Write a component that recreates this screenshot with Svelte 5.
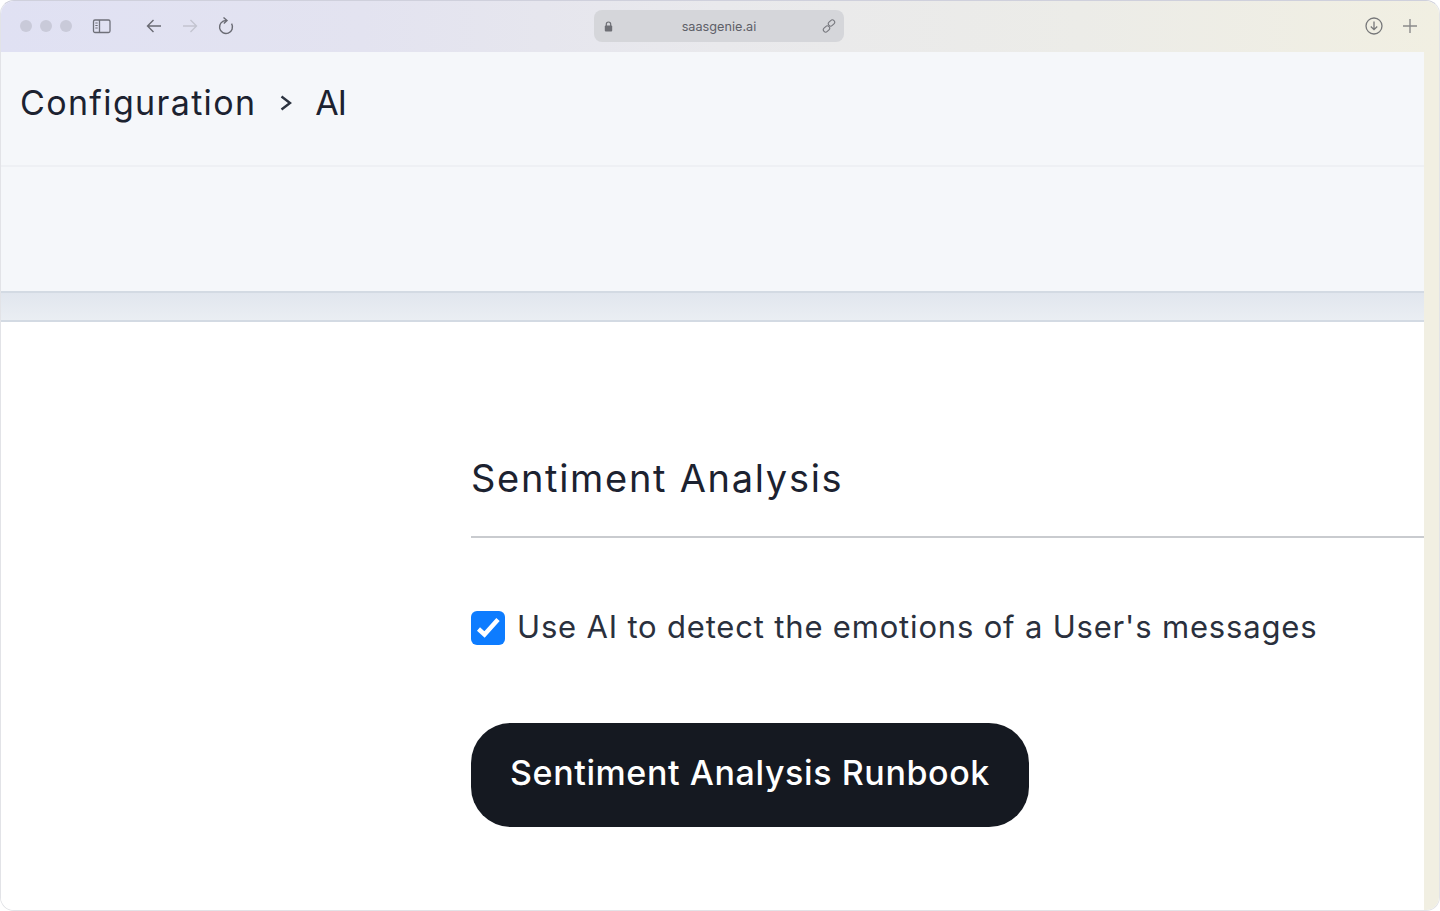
<script>
  const title = "Sentiment Analysis";
</script>

<div class="window">
  <header class="toolbar">
    <div class="lights">
      <span></span><span></span><span></span>
    </div>
    <svg class="ico sidebar" width="20" height="16" viewBox="0 0 20 16">
      <rect x="1.5" y="2" width="16.5" height="12.5" rx="1.5" fill="none" stroke="#6f7079" stroke-width="1.3" />
      <path d="M7.5 2v12.500" stroke="#6f7079" stroke-width="1.3" />
      <path d="M3.300 5h2.400M3.300 7.500h2.400M3.300 10h2.400" stroke="#6f7079" stroke-width="1" />
    </svg>
    <svg class="ico back" width="18" height="16" viewBox="0 0 18 16">
      <path d="M16 8H2.500M8.500 2 2.500 8l6 6" fill="none" stroke="#6a6b74" stroke-width="1.400" />
    </svg>
    <svg class="ico forward" width="18" height="16" viewBox="0 0 18 16">
      <path d="M2 8h13.500M9.500 2l6 6-6 6" fill="none" stroke="#c3c4d0" stroke-width="1.400" />
    </svg>
    <svg class="ico reload" width="16" height="18" viewBox="0 0 16 18">
      <path d="M8 3.500A6.500 6.500 0 1 0 13.600 6.700" fill="none" stroke="#6a6b74" stroke-width="1.400" />
      <path d="M5.500 .5 9 3.500 5.800 6.500" fill="none" stroke="#6a6b74" stroke-width="1.400" />
    </svg>

    <div class="address">
      <svg class="lock" width="9" height="11" viewBox="0 0 9 11">
        <path d="M2.300 5V3.200a2.200 2.200 0 0 1 4.400 0V5" fill="none" stroke="#6e6f75" stroke-width="1.200" />
        <rect x=".8" y="4.600" width="7.400" height="6" rx="1" fill="#6e6f75" />
      </svg>
      <span class="url">saasgenie.ai</span>
      <svg class="link" width="14" height="14" viewBox="0 0 14 14">
        <g fill="none" stroke="#77787e" stroke-width="1.100">
          <rect x="6" y="1.700" width="7" height="4.600" rx="2.300" transform="rotate(-45 9.500 4)" />
          <rect x="1" y="7.700" width="7" height="4.600" rx="2.300" transform="rotate(-45 4.500 10)" />
        </g>
      </svg>
    </div>

    <div class="right-icons">
      <svg width="18" height="18" viewBox="0 0 18 18">
        <circle cx="9" cy="9" r="8" fill="none" stroke="#77787a" stroke-width="1.300" />
        <path d="M9 4.500v8M5.800 9.500 9 12.700l3.200-3.200" fill="none" stroke="#77787a" stroke-width="1.300" />
      </svg>
      <svg width="14" height="14" viewBox="0 0 14 14">
        <path d="M7 0v14M0 7h14" stroke="#8a8a8b" stroke-width="1.400" />
      </svg>
    </div>
  </header>

  <div class="body">
    <main>
      <div class="crumbs">
        <span>Configuration</span>
        <svg width="12" height="18" viewBox="0 0 12 18">
          <path d="M1.500 2.500 10 9 1.500 15.500" fill="none" stroke="#2c3340" stroke-width="2.400" />
        </svg>
        <span class="current">AI</span>
      </div>
      <div class="subhead"></div>
      <div class="band"></div>
      <section class="content">
        <h2>{title}</h2>
        <label class="check">
          <span class="box">
            <svg width="34" height="34" viewBox="0 0 34 34">
              <path d="M7.500 18l6 5.500L27 8.500" fill="none" stroke="#fff" stroke-width="4.500" />
            </svg>
          </span>
          <span class="check-text">Use AI to detect the emotions of a User's messages</span>
        </label>
        <button>Sentiment Analysis Runbook</button>
      </section>
    </main>
    <div class="strip"></div>
  </div>
</div>

<style>
  :global(body) {
    margin: 0;
    background: #fff;
  }
  .window {
    height: 911px;
    box-sizing: border-box;
    display: flex;
    flex-direction: column;
    overflow: hidden;
    border-radius: 14px;
    border: 1px solid #e2e3e7;
    border-top-color: #cfd0dc;
    font-family: Inter, "Noto Sans", sans-serif;
    color: #1c2230;
  }
  .toolbar {
    height: 51px;
    flex: none;
    display: flex;
    align-items: center;
    padding: 0 0 1px 19px;
    background: linear-gradient(90deg, #e0e1f3 0%, #e3e3f0 25%, #e9e9ec 50%, #ececE8 75%, #f1efe2 100%);
    box-sizing: border-box;
  }
  .lights {
    display: flex;
    gap: 8px;
  }
  .lights span {
    width: 12px;
    height: 12px;
    border-radius: 50%;
    background: #c9cad9;
  }
  .ico {
    flex: none;
  }
  .sidebar {
    margin-left: 20px;
  }
  .back {
    margin-left: 33px;
  }
  .forward {
    margin-left: 18px;
  }
  .reload {
    margin-left: 19px;
  }
  .address {
    position: relative;
    margin-left: 360px;
    width: 250px;
    height: 32px;
    flex: none;
    display: flex;
    align-items: center;
    justify-content: space-between;
    padding: 0 8px 0 10px;
    box-sizing: border-box;
    border-radius: 8px;
    background: #d5d6da;
  }
  .url {
    font-size: 12.700px;
    color: #5e6068;
    margin-left: 3px;
  }
  .right-icons {
    margin-left: auto;
    padding-right: 22px;
    display: flex;
    align-items: center;
    gap: 20px;
  }
  .body {
    flex: 1;
    display: flex;
    min-height: 0;
  }
  main {
    flex: 1;
    display: flex;
    flex-direction: column;
    background: #fff;
  }
  .crumbs {
    height: 115px;
    box-sizing: border-box;
    padding: 0 0 12px 19px;
    display: flex;
    align-items: center;
    gap: 24px;
    background: #f5f7fa;
    font-size: 34px;
    letter-spacing: 1.350px;
    border-bottom: 2px solid #eef0f4;
  }
  .current {
    margin-left: -1px;
    letter-spacing: -1px;
  }
  .subhead {
    height: 124px;
    background: #f5f7fa;
  }
  .band {
    height: 31px;
    box-sizing: border-box;
    background: linear-gradient(180deg, #e1e6ee, #eaeef3);
    border-top: 2px solid #d3dae3;
    border-bottom: 2px solid #d3dae3;
  }
  .content {
    flex: 1;
    padding: 128px 0 0 470px;
  }
  h2 {
    margin: 0;
    height: 86px;
    font-size: 38px;
    font-weight: 400;
    line-height: 56px;
    letter-spacing: 1.700px;
    border-bottom: 2px solid #c9cbcf;
  }
  .check {
    margin-top: 71px;
    display: flex;
    align-items: center;
    gap: 12px;
    font-size: 31px;
    line-height: 36px;
    letter-spacing: 0.820px;
    color: #2a303d;
  }
  .check-text {
    padding-bottom: 2px;
  }
  .box {
    width: 34px;
    height: 34px;
    flex: none;
    border-radius: 6px;
    background: #0d7cff;
    display: flex;
  }
  button {
    display: block;
    margin-top: 76px;
    padding: 0 0 6px;
    width: 558px;
    height: 104px;
    border: 0;
    border-radius: 40px;
    background: #151921;
    color: #fff;
    font-family: inherit;
    font-size: 34px;
    font-weight: 500;
    letter-spacing: 0.600px;
  }
  .strip {
    width: 15px;
    flex: none;
    background: #f1efe2;
  }
</style>
